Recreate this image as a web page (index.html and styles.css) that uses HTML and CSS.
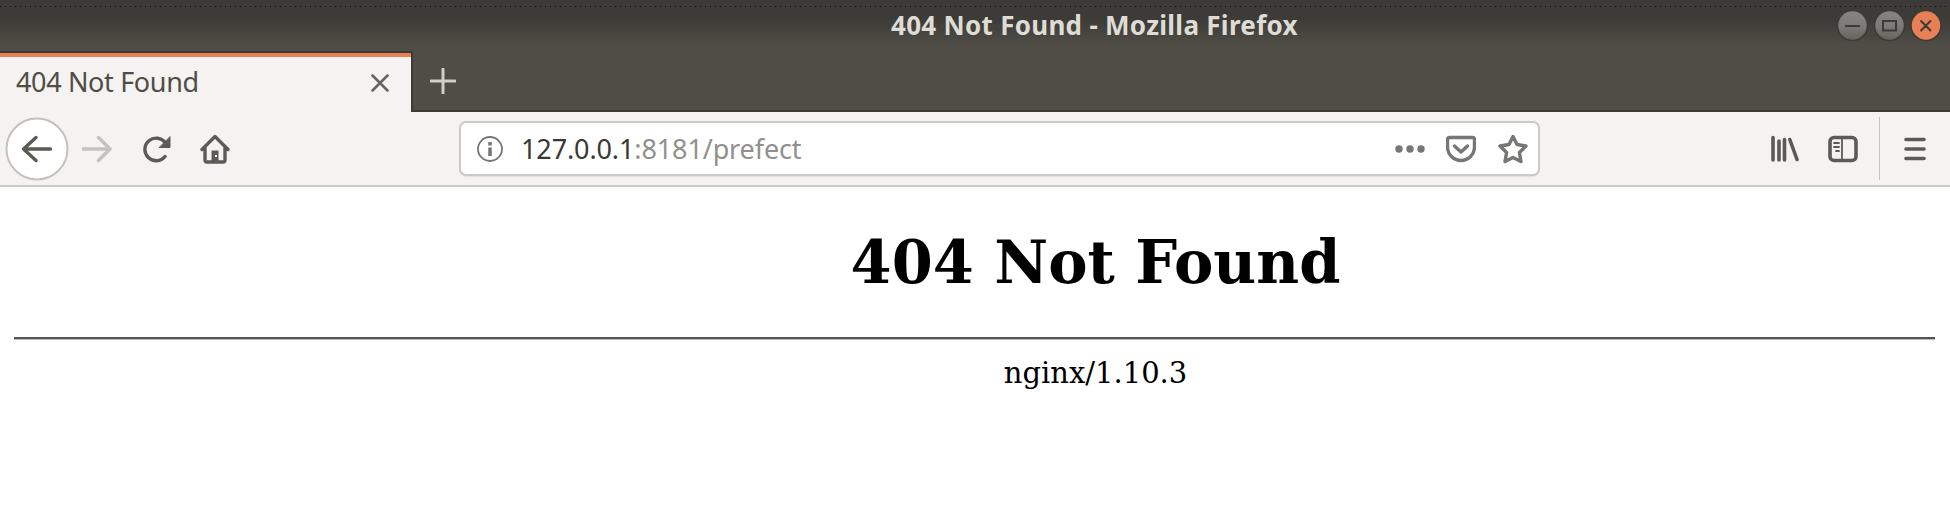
FILE: index.html
```html
<!DOCTYPE html>
<html lang="en">
<head>
<meta charset="utf-8">
<title>404 Not Found</title>
<link rel="stylesheet" href="styles.css">
</head>
<body>
<header class="chrome">
  <div class="titlebar">
    <span class="window-title">404 Not Found - Mozilla Firefox</span>
    <svg class="window-buttons" viewBox="0 0 106 34">
      <defs><linearGradient id="metal" x1="0" y1="0" x2="0" y2="1"><stop offset="0" stop-color="#858583"/><stop offset=".5" stop-color="#7c7b78"/><stop offset="1" stop-color="#64625c"/></linearGradient></defs>
      <g stroke="#3c3b37" stroke-width="1.5">
        <circle cx="16.5" cy="17.5" r="15" fill="url(#metal)"/>
        <circle cx="53.5" cy="17.5" r="15" fill="url(#metal)"/>
        <circle cx="90" cy="17.5" r="15" fill="#e78055"/>
      </g>
      <g fill="none" stroke="#3c3b37" stroke-width="2">
        <path d="M9 18h15M47 13h13v9.5H47zM84.500 12.500l10.500 10.500M95 12.500L84.500 23"/>
      </g>
    </svg>
  </div>
  <nav class="tabs">
    <div class="tab">
      <span class="tab-title">404 Not Found</span>
      <svg class="tab-close" viewBox="0 0 18 18"><path d="M1.500 1.500l15 15M16.500 1.500l-15 15"/></svg>
    </div>
    <div class="tab-rest"><svg class="new-tab" viewBox="0 0 26 26"><path d="M13 1v24M1 13h24"/></svg></div>
  </nav>
  <div class="toolbar">
    <div class="nav-icons">
      <svg class="back" viewBox="0 0 64 64"><circle cx="32" cy="32" r="30.500"/><path d="M45.500 32H18.500M31 20.500L18.500 32l12.500 11.500"/></svg>
      <svg class="forward" viewBox="0 0 30 28"><path d="M1 14h27M16.500 2.500L28 14 16.500 25.500"/></svg>
      <svg class="reload" viewBox="0 0 28 28"><path d="M22 21.500A11.300 11.300 0 1 1 22.500 8"/><path class="tip" d="M27 2V12.500H16.500z"/></svg>
      <svg class="home" viewBox="0 0 30 30"><path d="M2 15.500L15 2.500l13 13M5 14v12q0 2 2 2h16q2 0 2-2V14"/><path class="door" d="M11.500 28V16.500h7V28z"/><path class="knob" d="M15 21h2v2h-2z"/></svg>
    </div>
    <div class="urlbar">
      <svg class="info" viewBox="0 0 26 26"><circle cx="13" cy="13" r="12"/><path d="M13 6v3.500M13 11.500V20"/></svg>
      <span class="url"><span class="host">127.0.0.1</span><span class="path">:8181/prefect</span></span>
      <svg class="more" viewBox="0 0 30 8"><circle cx="4" cy="4" r="3.700"/><circle cx="15" cy="4" r="3.700"/><circle cx="26" cy="4" r="3.700"/></svg>
      <svg class="pocket" viewBox="0 0 30 28"><path d="M3.500 2.500h23q2 0 2 2V12a13.500 13.500 0 0 1-27 0V4.500q0-2 2-2z"/><path d="M8.500 11l6.500 6 6.500-6"/></svg>
      <svg class="star" viewBox="0 0 30 30"><path d="M15 2.500l4 8 9 1.500-6.600 6.500 1.600 9L15 23.500l-8 4 1.600-9L2 12l9-1.500z"/></svg>
    </div>
    <div class="tool-icons">
      <svg class="library" viewBox="0 0 30 28"><path d="M3 2.500v22.500M9 6v19M14.500 4.500v20.500M19.800 4.500l7.200 20"/></svg>
      <svg class="sidebar" viewBox="0 0 30 28"><rect x="2" y="2.500" width="26" height="23" rx="4"/><path class="thin" d="M14 3v22M6 8h5M6 12h5M8 16h3"/></svg>
      <div class="divider"></div>
      <svg class="menu" viewBox="0 0 24 26"><path d="M3 3.500h18M3 13h18M3 22.500h18"/></svg>
    </div>
  </div>
</header>
<main class="page">
  <h1 class="heading">404 Not Found</h1>
  <hr class="rule">
  <p class="server">nginx/1.10.3</p>
</main>
</body>
</html>
```
FILE: styles.css
```css
* { box-sizing: border-box; }
body { margin: 0; background: #fff; overflow: hidden; font-family: "Noto Sans", sans-serif; }
svg { display: block; flex: none; fill: none; }
.titlebar {
  height: 51px; display: flex; justify-content: flex-end; position: relative;
  background: repeating-linear-gradient(90deg, #111 0 1px, transparent 1px 5px) 0 6px / 100% 1px no-repeat,
    linear-gradient(#3c3b37 18px, #504d46 46px);
}
.window-title {
  position: absolute; left: 891px; top: 7px; line-height: 36px;
  font-size: 26px; font-weight: 700; letter-spacing: .29px; color: #dfdcd6; white-space: nowrap;
}
.window-buttons { width: 106px; height: 34px; margin: 8px 8px 0 0; }
.tabs { height: 61px; display: flex; }
.tab {
  width: 411px; background: #f4f3f1; border-top: 4px solid #e78055;
  margin-top: 2px; box-shadow: 0 -2px #3c3b37;
  display: flex; justify-content: space-between; align-items: center; padding: 0 22px 6px 16px;
}
.tab-title { font-size: 27px; line-height: 36px; letter-spacing: -.35px; color: #504d46; white-space: nowrap; }
.tab-close { width: 18px; height: 18px; stroke: #65635e; stroke-width: 2.5; stroke-linecap: round; margin-top: 3px; }
.tab-rest { flex: 1; background: #504d46; border-left: 2px solid #3c3b37; border-bottom: 2px solid #3c3b37; padding: 17px 0 0 17px; }
.new-tab { width: 26px; height: 26px; stroke: #d0cec9; stroke-width: 3; stroke-linecap: round; }
.toolbar { height: 75px; background: #f4f3f1; border-bottom: 2px solid #cbcac6; display: flex; align-items: center; }
.nav-icons { width: 459px; flex: none; display: flex; align-items: center; stroke: #5c5a55; stroke-width: 3.4; stroke-linecap: round; stroke-linejoin: round; }
.back { width: 64px; height: 64px; margin-left: 5px; }
.back circle { fill: #fff; stroke: #c4c2bd; stroke-width: 2; }
.forward { width: 30px; height: 28px; margin-left: 13px; stroke: #c4c2be; }
.reload { width: 28px; height: 28px; margin-left: 31px; }
.tip { fill: #5c5a55; stroke-width: 1; }
.home { width: 30px; height: 30px; margin-left: 29px; }
.door { fill: #5c5a55; stroke: none; }
.knob { fill: #f4f3f1; stroke: none; }
.urlbar {
  width: 1081px; height: 55px; flex: none; background: #fff; border: 2px solid #cbcac6; border-radius: 7px;
  box-shadow: 0 1px 1px #e3e2df; display: flex; align-items: center; stroke: #777674; stroke-width: 3.4; stroke-linejoin: round; stroke-linecap: round;
}
.info { width: 26px; height: 26px; margin-left: 16px; stroke-width: 1.8; }
.info path { stroke-width: 3.5; stroke-linecap: butt; }
.url { width: 892px; padding-left: 18px; font-size: 27px; line-height: 36px; letter-spacing: -.12px; white-space: nowrap; }
.host { color: #393834; }
.path { color: #91908d; }
.more { width: 30px; height: 8px; fill: #777674; stroke: none; }
.pocket { width: 30px; height: 28px; margin-left: 21px; }
.star { width: 30px; height: 30px; margin-left: 22px; }
.tool-icons { display: flex; align-items: center; stroke: #5c5a55; stroke-width: 3.6; stroke-linecap: round; }
.library { width: 30px; height: 28px; margin-left: 230px; }
.sidebar { width: 30px; height: 28px; margin-left: 28px; }
.thin { stroke-width: 1.8; }
.divider { width: 1px; height: 63px; background: #c5c3bf; margin-left: 21px; }
.menu { width: 24px; height: 26px; margin-left: 23px; }
.page { padding: 0 15px 0 14px; text-align: center; font-family: "DejaVu Serif", serif; color: #000; }
.heading { margin: 0; padding: 40px 0 39px 242px; font-size: 59px; line-height: 71px; }
.rule { margin: 0; height: 3px; border: 0; background: linear-gradient(#555450 0 2px, #bdbbb7 2px 3px); }
.server { margin: 14px 0 0; padding-left: 242px; font-size: 29px; line-height: 38px; }
```
